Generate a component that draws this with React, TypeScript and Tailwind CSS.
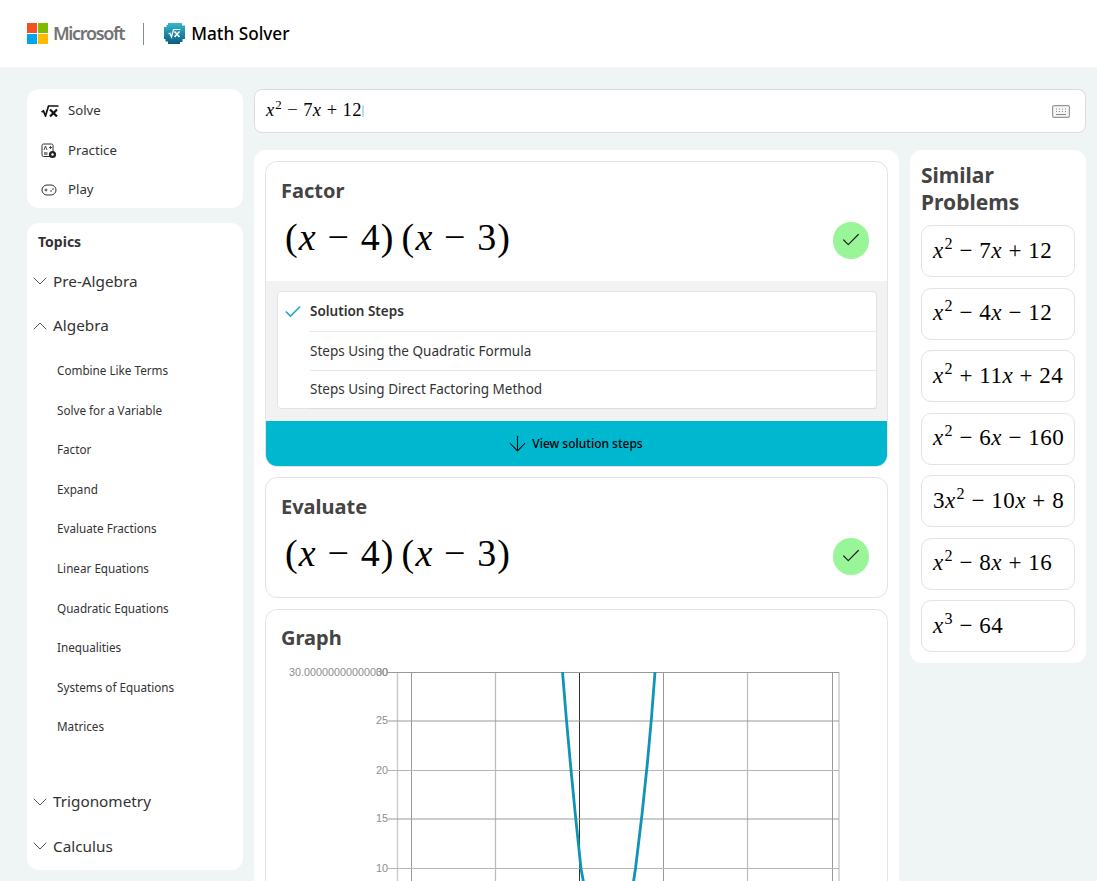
import React from "react";
import { Check, ChevronDown, ChevronUp, ArrowDown } from "lucide-react";

const sans = "font-['Noto_Sans','Open_Sans',sans-serif]";

function X() {
  return <i className="italic">x</i>;
}
function Op({ c }: { c: string }) {
  return <span className="mx-[0.28em]">{c}</span>;
}
function Math2({ coef, pow = "2", rest, size }: { coef?: string; pow?: string; rest: React.ReactNode; size: string }) {
  return (
    <span className={`font-['Liberation_Serif',serif] text-black whitespace-nowrap tracking-[0.02em] ${size}`}>
      {coef}
      <X />
      <sup className="text-[0.7em] leading-none relative -top-[0.55em] align-baseline ml-[0.05em]">{pow}</sup>
      {rest}
    </span>
  );
}
function Factored() {
  return (
    <span className="font-['Liberation_Serif',serif] text-[38px] leading-none text-black whitespace-nowrap tracking-[0.03em]">
      (<X /><Op c="−" />4)<span className="ml-[7px]">(</span><X /><Op c="−" />3)
    </span>
  );
}

function GreenCheck() {
  return (
    <div className="w-9 h-[37px] rounded-full bg-[#98f598] flex items-center justify-center">
      <Check size={22} strokeWidth={1.3} className="text-[#222]" />
    </div>
  );
}

function Logo() {
  return (
    <svg width="21" height="21" viewBox="0 0 21 21" className="shrink-0">
      <rect width="10" height="10" fill="#f25022" />
      <rect x="11" width="10" height="10" fill="#7fba00" />
      <rect y="11" width="10" height="10" fill="#00a4ef" />
      <rect x="11" y="11" width="10" height="10" fill="#ffb900" />
    </svg>
  );
}

function SolverIcon() {
  return (
    <svg width="21" height="21" viewBox="0 0 21 21" className="shrink-0">
      <defs>
        <linearGradient id="ms" x1="0" y1="0" x2="0" y2="1">
          <stop offset="0" stopColor="#35b8c8" />
          <stop offset="1" stopColor="#0b5a84" />
        </linearGradient>
      </defs>
      <path d="M4 0H18V2.5H21V16H18.5V19H16V21H4V18.5H1.5V16H0V4H2.5V2H4Z" fill="url(#ms)" />
      <path d="M4.5 11L6 10.2L7.5 14L9.5 6.5H16.5" stroke="#fff" strokeWidth="1.2" fill="none" />
      <path d="M10.5 8.5L15.5 14M15.5 8.5L10.5 14" stroke="#fff" strokeWidth="1.5" fill="none" />
    </svg>
  );
}

function SolveIcon() {
  return (
    <svg width="18" height="12" viewBox="0 0 18 12">
      <path d="M0.5 7L2.5 6L4.5 11L7.5 1H17.5" stroke="#111" strokeWidth="1.7" fill="none" />
      <path d="M9 4.5L16 11.5M16 4.5L9 11.5" stroke="#111" strokeWidth="2.2" fill="none" />
    </svg>
  );
}
function PracticeIcon() {
  return (
    <svg width="16" height="16" viewBox="0 0 16 16">
      <rect x="1" y="1" width="11" height="12.5" rx="1.5" stroke="#333" strokeWidth="1" fill="none" />
      <rect x="3" y="9" width="3.5" height="3" fill="#888" />
      <path d="M3 7L4.5 3L6 7M8 4.5H11M9.5 3V6" stroke="#333" strokeWidth="0.9" fill="none" />
      <circle cx="11.5" cy="11.5" r="3.6" fill="#222" />
      <circle cx="11.5" cy="11.5" r="1.2" fill="#fff" />
    </svg>
  );
}
function PlayIcon() {
  return (
    <svg width="16" height="12" viewBox="0 0 16 12">
      <rect x="1" y="1" width="14" height="10" rx="5" stroke="#333" strokeWidth="1" fill="none" />
      <path d="M3.5 6H6.5M5 4.5V7.5" stroke="#333" strokeWidth="0.9" />
      <circle cx="10" cy="7" r="0.8" fill="#333" />
      <circle cx="12" cy="5" r="0.8" fill="#333" />
    </svg>
  );
}
function KeyboardIcon() {
  return (
    <svg width="18" height="13" viewBox="0 0 18 13">
      <rect x="0.6" y="0.6" width="16.8" height="11.8" rx="1.5" fill="#f5f5f5" stroke="#999" strokeWidth="1.2" />
      <path d="M4 4H5M7 4H8M10 4H11M13 4H14M4 6.5H5M7 6.5H8M10 6.5H11M13 6.5H14M4 9.5H14" stroke="#888" strokeWidth="1" />
    </svg>
  );
}

function Graph() {
  const hy = [672.5, 721, 770.5, 819, 868.5];
  const labels = ["", "25", "20", "15", "10"];
  return (
    <svg width="600" height="225" viewBox="266 660 600 225" className="block">
      <g fill="none">
        <path d="M397.5 672V885" stroke="#ccc" strokeWidth="1.5" />
        <path d="M839 672V885" stroke="#ccc" strokeWidth="1.5" />
        {[411, 663, 832].map((x) => (
          <path key={x} d={`M${x}.5 672V885`} stroke="#999" strokeWidth="1" />
        ))}
        {[495, 747].map((x) => (
          <path key={x} d={`M${x}.5 672V885`} stroke="#bbb" strokeWidth="1.2" />
        ))}
        <path d="M579.5 672V885" stroke="#333" strokeWidth="1" />
        {hy.map((y, i) => (
          <path key={y} d={`M388 ${y}H839`} stroke={i === 2 || i === 4 ? "#b5b5b5" : "#999"} strokeWidth={i === 2 || i === 4 ? 1.2 : 1} />
        ))}
        <path d="M562.5 672Q570.25 770 581 868.5L584 885" stroke="#0f93b7" strokeWidth="2.8" />
        <path d="M655 672Q648.15 770 635.5 868.5L633 885" stroke="#0f93b7" strokeWidth="2.8" />
      </g>
      <g fontFamily="Liberation Sans, sans-serif" fontSize="10.8" fill="#8c8c8c" textAnchor="end">
        <text x="388" y="676">30.00000000000000</text>
        <text x="388" y="676">30</text>
        {labels.map((l, i) =>
          l ? (
            <text key={l} x="388" y={hy[i] + 3}>
              {l}
            </text>
          ) : null
        )}
      </g>
    </svg>
  );
}

const topics = [
  "Combine Like Terms",
  "Solve for a Variable",
  "Factor",
  "Expand",
  "Evaluate Fractions",
  "Linear Equations",
  "Quadratic Equations",
  "Inequalities",
  "Systems of Equations",
  "Matrices",
];

const similar: { coef?: string; pow?: string; rest: React.ReactNode }[] = [
  { rest: <><Op c="−" />7<X /><Op c="+" />12</> },
  { rest: <><Op c="−" />4<X /><Op c="−" />12</> },
  { rest: <><Op c="+" />11<X /><Op c="+" />24</> },
  { rest: <><Op c="−" />6<X /><Op c="−" />160</> },
  { coef: "3", rest: <><Op c="−" />10<X /><Op c="+" />8</> },
  { rest: <><Op c="−" />8<X /><Op c="+" />16</> },
  { pow: "3", rest: <><Op c="−" />64</> },
];

function Nav({ icon, label, h }: { icon: React.ReactNode; label: string; h: string }) {
  return (
    <div className={`flex items-center text-[13.2px] text-[#333] ${h}`}>
      <span className="w-[41px] pl-[14px] flex items-center">{icon}</span>
      {label}
    </div>
  );
}

function TopicHead({ open, label }: { open?: boolean; label: string }) {
  const Icon = open ? ChevronUp : ChevronDown;
  return (
    <div className="flex items-center h-[44.5px] text-[15.3px] text-[#333]">
      <span className="w-[26px] pl-px flex items-center">
        <Icon size={24} strokeWidth={1} className="text-[#555]" />
      </span>
      {label}
    </div>
  );
}

function ResultCard({ title, children }: { title: string; children?: React.ReactNode }) {
  return (
    <div className="rounded-xl border border-[#e3e3e3] overflow-hidden bg-white">
      <div className="px-[15px] pt-[15px] h-[119px]">
        <div className="text-[20px] leading-[28px] font-bold text-[#444]">{title}</div>
        <div className="flex items-center justify-between pr-[3px] mt-[12px] pl-[4px] h-[40px]">
          <Factored />
          <span className="mt-[6px]"><GreenCheck /></span>
        </div>
      </div>
      {children}
    </div>
  );
}

function Step({ label, first, last, h }: { label: string; first?: boolean; last?: boolean; h: string }) {
  return (
    <div className={`flex items-center ${h}`}>
      <span className="w-[32px] pl-[5px] shrink-0">{first && <Check size={20} strokeWidth={2} className="text-[#2aa9c0]" />}</span>
      <div className={`flex-1 h-full flex items-center text-[13.5px] text-[#333] ${first ? "font-semibold" : ""} border-b ${last ? "border-[#dcdcdc]" : "border-[#e8e8e8]"}`}>
        {label}
      </div>
    </div>
  );
}

export default function App() {
  return (
    <div className={`h-[881px] overflow-hidden bg-[#eff5f5] ${sans}`}>
      <header className="h-[67px] bg-white flex items-center pl-[27px]">
        <Logo />
        <span className="ml-[5px] text-[18px] font-semibold text-[#737373] tracking-[-1.35px]">Microsoft</span>
        <span className="w-px h-[22px] bg-[#7f8f9c] ml-[19px]" />
        <span className="ml-[20px]"><SolverIcon /></span>
        <span className="ml-[6px] text-[17.2px] font-medium text-black">Math Solver</span>
      </header>

      <div className="flex gap-[11px] px-[27px] pr-[11px] pt-[22px]">
        <aside className="w-[216px] shrink-0 flex flex-col gap-[15px]">
          <div className="bg-white rounded-xl h-[119px] pt-[2px]">
            <Nav h="h-[40px]" icon={<SolveIcon />} label="Solve" />
            <Nav h="h-[39.5px]" icon={<PracticeIcon />} label="Practice" />
            <Nav h="h-[39px]" icon={<PlayIcon />} label="Play" />
          </div>
          <div className="bg-white rounded-xl h-[647px] pt-[7px]">
            <div className="pl-[11px] text-[14px] leading-[24px] font-bold text-[#333]">Topics</div>
            <div className="mt-[5px]">
              <TopicHead label="Pre-Algebra" />
              <TopicHead open label="Algebra" />
              <div className="pl-[30px] pt-[3px] mb-[32.5px]">
                {topics.map((t) => (
                  <div key={t} className="h-[39.6px] flex items-center text-[11.7px] text-[#333]">
                    {t}
                  </div>
                ))}
              </div>
              <TopicHead label="Trigonometry" />
              <TopicHead label="Calculus" />
            </div>
          </div>
        </aside>

        <main className="flex-1 min-w-0">
          <div className="h-[44px] bg-white border border-[#dcdcdc] rounded-lg flex items-center justify-between pl-[11px] pr-[15px]">
            <span className="flex items-center">
              <Math2 size="text-[18.5px]" rest={<><Op c="−" />7<X /><Op c="+" />12</>} />
              <span className="w-[2px] h-[12px] bg-[#bcdfe8]" />
            </span>
            <KeyboardIcon />
          </div>

          <div className="flex gap-[11px] mt-[17px]">
            <div className="w-[645px] bg-white rounded-xl p-[11px] flex flex-col gap-[10px]">
              <ResultCard title="Factor">
                <div className="bg-[#f2f2f2] h-[140px] pl-[11px] pr-[10px] pt-[10px]">
                  <div className="bg-white rounded-[4px] border border-[#e3e3e3] h-[118px]">
                    <Step h="h-[40px]" first label="Solution Steps" />
                    <Step h="h-[39px]" label="Steps Using the Quadratic Formula" />
                    <Step h="h-[38px]" last label="Steps Using Direct Factoring Method" />
                  </div>
                </div>
                <div className="h-[45px] bg-[#00b7d0] flex items-center justify-center text-[12px] font-medium text-black gap-[2px] pr-[5px]">
                  <ArrowDown size={25} strokeWidth={1} />
                  View solution steps
                </div>
              </ResultCard>
              <ResultCard title="Evaluate" />
              <div className="mt-px rounded-xl border border-[#e3e3e3] h-[300px] overflow-hidden">
                <div className="px-[15px] pt-[14px] text-[20px] leading-[28px] font-bold text-[#444]">Graph</div>
                <div className="mt-[8px]"><Graph /></div>
              </div>
            </div>

            <div className="flex-1 bg-white rounded-xl self-start px-[11px] pt-[12px] pb-[11px]">
              <div className="text-[21px] leading-[27px] font-bold text-[#444]">Similar Problems</div>
              <div className="flex flex-col gap-[10.5px] mt-[9px]">
                {similar.map((s, i) => (
                  <div key={i} className="h-[52px] border border-[#e3e3e3] rounded-[10px] flex items-center pl-[11px]">
                    <Math2 size="text-[23px]" coef={s.coef} pow={s.pow} rest={s.rest} />
                  </div>
                ))}
              </div>
            </div>
          </div>
        </main>
      </div>
    </div>
  );
}
